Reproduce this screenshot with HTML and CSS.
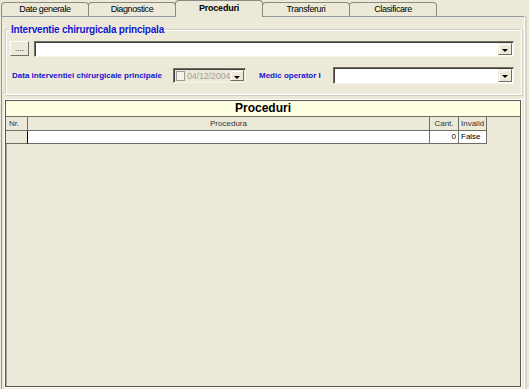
FILE: index.html
```html
<!DOCTYPE html>
<html lang="ro">

<head>
    <meta charset="utf-8">
    <meta name="viewport" content="width=device-width, initial-scale=1.0">
    <title>Proceduri</title>
    <link rel="stylesheet" href="styles.css">
</head>

<body>
    <nav class="tabs">
        <div class="tab">Date generale</div>
        <div class="tab">Diagnostice</div>
        <div class="tab activ">Proceduri</div>
        <div class="tab">Transferuri</div>
        <div class="tab">Clasificare</div>
    </nav>

    <main class="panel">
        <fieldset class="grup">
            <legend>Interventie chirurgicala principala</legend>
            <div class="rand rand-sus">
                <button class="puncte">....</button>
                <div class="combo lung">
                    <span class="sageata"></span>
                </div>
            </div>
            <div class="rand rand-jos">
                <label class="eticheta data-eticheta">Data interventiei chirurgicale principale</label>
                <div class="data">
                    <span class="bifa"></span>
                    <span class="data-text">04/12/2004</span>
                    <span class="sageata"></span>
                </div>
                <label class="eticheta medic-eticheta">Medic operator I</label>
                <div class="combo medic">
                    <span class="sageata"></span>
                </div>
            </div>
        </fieldset>

        <section class="grila">
            <h2 class="titlu">Proceduri</h2>
            <div class="tabel">
                <div class="celula cap nr">Nr.</div>
                <div class="celula cap procedura">Procedura</div>
                <div class="celula cap cant">Cant.</div>
                <div class="celula cap invalid">Invalid</div>

                <div class="celula indicator"></div>
                <div class="celula alb"></div>
                <div class="celula alb dreapta">0</div>
                <div class="celula alb">False</div>
            </div>
        </section>
    </main>
</body></html>
```

FILE: styles.css
```css
body {
    margin: 0;
    width: 529px;
    height: 389px;
    overflow: hidden;
    background-color: #ECE9D8;
    font-family: "Liberation Sans", Arial, sans-serif;
    color: #000;
}

.tabs {
    display: flex;
    align-items: flex-end;
    height: 16px;
    padding-left: 1px;
    position: relative;
    z-index: 1;
}

.tab {
    box-sizing: border-box;
    width: 88px;
    height: 14px;
    margin-right: -1px;
    border: 1px solid #8a8a80;
    border-bottom: none;
    border-radius: 4px 4px 0 0;
    font-size: 9px;
    letter-spacing: -0.4px;
    line-height: 12px;
    text-align: center;
    background-color: #ECE9D8;
}

.activ {
    height: 17px;
    margin-bottom: -1px;
    font-weight: bold;
    letter-spacing: -0.2px;
    line-height: 14px;
}

.panel {
    box-sizing: border-box;
    width: 524px;
    height: 374px;
    margin-left: 1px;
    border: 1px solid #919B9C;
    border-right-color: #FFFFFF;
    box-shadow: 2px 0 0 #D8D4C4;
    padding: 0 0 0 3px;
}

.grup {
    box-sizing: border-box;
    width: 517px;
    margin: 7px 0 0 0;
    padding: 0 6px 10px 2px;
    border-style: solid;
    border-width: 1px;
    border-color: #D0CDBE #FFFFFF #FFFFFF #D0CDBE;
    box-shadow: inset 1px 1px 0 #FFFFFF, 1px 1px 0 #D0CDBE;
}

.grup legend {
    margin-left: 1px;
    padding: 0 2px;
    font-size: 10px;
    font-weight: bold;
    color: #1414D2;
    letter-spacing: -0.2px;
}

.rand {
    display: flex;
    align-items: center;
}

.rand-sus {
    margin-top: 5px;
    height: 17px;
}

.rand-jos {
    margin-top: 10px;
    height: 17px;
}

.puncte {
    box-sizing: border-box;
    width: 19px;
    height: 15px;
    margin: 0 5px 0 2px;
    padding: 0;
    border: 1px solid;
    border-color: #FFFFFF #716F64 #716F64 #FFFFFF;
    background-color: #ECE9D8;
    font-family: "Liberation Sans", Arial, sans-serif;
    font-size: 8px;
    line-height: 8px;
}

.combo {
    box-sizing: border-box;
    position: relative;
    height: 16px;
    background-color: #FFFFFF;
    border: 1px solid;
    border-color: #716F64 #F4F3EE #F4F3EE #716F64;
    box-shadow: inset 1px 1px 0 #404040;
}

.lung {
    width: 480px;
}

.medic {
    width: 181px;
    height: 17px;
}

.sageata {
    position: absolute;
    right: 1px;
    top: 1px;
    bottom: 1px;
    width: 14px;
    box-sizing: border-box;
    background-color: #ECE9D8;
    border: 1px solid;
    border-color: #ECE9D8 #716F64 #716F64 #ECE9D8;
    box-shadow: inset 1px 1px 0 #FFFFFF;
}

.sageata::after {
    content: "";
    position: absolute;
    left: 3px;
    top: 5px;
    border-left: 3px solid transparent;
    border-right: 3px solid transparent;
    border-top: 3px solid #000000;
}

.eticheta {
    font-size: 8px;
    font-weight: bold;
    color: #1414D2;
    white-space: nowrap;
}

.data-eticheta {
    margin-left: 4px;
    width: 161px;
}

.data {
    box-sizing: border-box;
    position: relative;
    display: flex;
    align-items: center;
    width: 73px;
    height: 15px;
    background-color: #ECE9D8;
    border: 1px solid;
    border-color: #716F64 #F4F3EE #F4F3EE #716F64;
    box-shadow: inset 1px 1px 0 #404040;
}

.bifa {
    box-sizing: border-box;
    width: 9px;
    height: 10px;
    margin-left: 2px;
    background-color: #F4F3EE;
    border: 1px solid #A09E90;
}

.data-text {
    margin-left: 2px;
    font-size: 9px;
    color: #A5A39A;
    letter-spacing: -0.2px;
}

.medic-eticheta {
    margin-left: 13px;
    width: 74px;
}

.grila {
    box-sizing: border-box;
    width: 516px;
    height: 287px;
    margin-top: 5px;
    border: 1px solid #5A5850;
    box-shadow: 0 0 0 1px #FFFFFF, inset 1px 1px 0 #A8A698;
}

.titlu {
    margin: 0;
    height: 15px;
    background-color: #FFFFE1;
    border-bottom: 1px solid #716F64;
    font-size: 12px;
    line-height: 15px;
    text-align: center;
}

.tabel {
    display: grid;
    grid-template-columns: 22px 402px 29px 28px;
    grid-template-rows: 14px 13px;
}

.celula {
    box-sizing: border-box;
    border-right: 1px solid #716F64;
    border-bottom: 1px solid #716F64;
    font-size: 8px;
    line-height: 13px;
    padding: 0 2px;
    white-space: nowrap;
}

.cap {
    text-align: center;
    background-color: #ECE9D8;
    color: #333;
}

.nr {
    text-align: left;
    padding-left: 3px;
}

.indicator {
    background-color: #ECE9D8;
    border-right-color: #000000;
}

.alb {
    background-color: #FFFFFF;
    line-height: 12px;
}

.dreapta {
    text-align: right;
}
```
